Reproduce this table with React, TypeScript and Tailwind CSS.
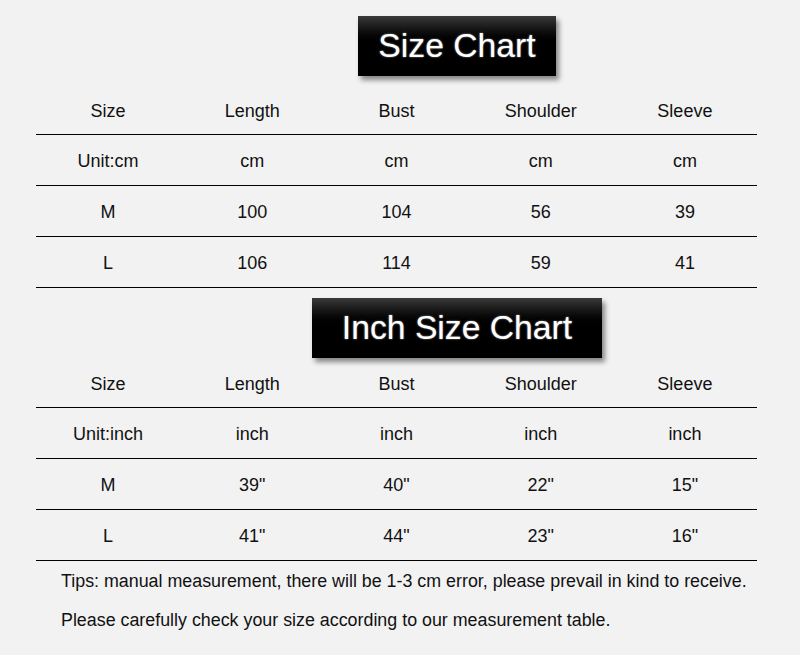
const cmRows = [
  ["Unit:cm", "cm", "cm", "cm", "cm"],
  ["M", "100", "104", "56", "39"],
  ["L", "106", "114", "59", "41"],
];

const inchRows = [
  ["Unit:inch", "inch", "inch", "inch", "inch"],
  ["M", '39"', '40"', '22"', '15"'],
  ["L", '41"', '44"', '23"', '16"'],
];

const headers = ["Size", "Length", "Bust", "Shoulder", "Sleeve"];

function Title({ text, width }: { text: string; width: string }) {
  return (
    <div className="flex justify-center pl-[114px]">
      <div
        className={`${width} h-[60px] flex items-center justify-center bg-gradient-to-b from-[#3a3a3a] via-black to-black shadow-[3px_4px_5px_rgba(0,0,0,0.45)]`}
      >
        <span className="text-[33.7px] text-white leading-none [text-shadow:0_0_2px_rgba(255,255,255,0.6)]">
          {text}
        </span>
      </div>
    </div>
  );
}

function Row({ cells, header }: { cells: string[]; header?: boolean }) {
  return (
    <div
      className={`grid grid-cols-5 border-b border-black ${header ? "h-[50px]" : "h-[51px]"}`}
    >
      {cells.map((c, i) => (
        <div key={i} className="flex items-center justify-center pt-[3px]">
          {c}
        </div>
      ))}
    </div>
  );
}

function Table({ rows }: { rows: string[][] }) {
  return (
    <div className="mx-[36px] w-[721px]">
      <Row cells={headers} header />
      {rows.map((r, i) => (
        <Row key={i} cells={r} />
      ))}
    </div>
  );
}

export default function App() {
  return (
    <div className="w-[800px] h-[655px] bg-[#f2f2f2] text-[#111] text-[18px] font-['Liberation_Sans',Arial,sans-serif] pt-[16px]">
      <Title text="Size Chart" width="w-[198px]" />
      <div className="mt-[9px]">
        <Table rows={cmRows} />
      </div>
      <div className="mt-[10px]">
        <Title text="Inch Size Chart" width="w-[290px]" />
      </div>
      <Table rows={inchRows} />
      <div className="pl-[61px] text-[17.85px]">
        <p className="leading-[39px] pt-[1px]">
          Tips: manual measurement, there will be 1-3 cm error, please prevail in kind to receive.
        </p>
        <p className="leading-[39px]">
          Please carefully check your size according to our measurement table.
        </p>
      </div>
    </div>
  );
}
